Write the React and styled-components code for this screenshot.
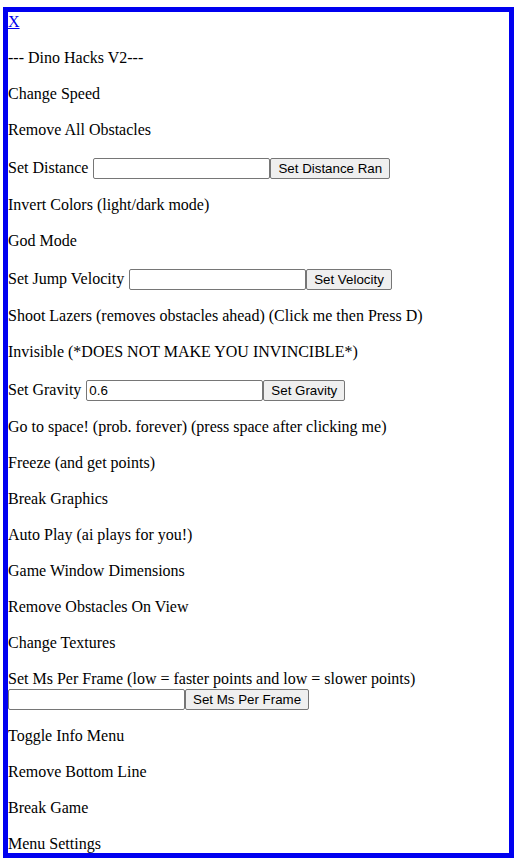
import styled, { createGlobalStyle } from 'styled-components'

const GlobalStyle = createGlobalStyle`
  body {
    margin: 0;
    background: #ffffff;
    font-family: 'Liberation Serif', 'Times New Roman', serif;
    font-size: 16px;
    color: #000000;
  }
`

const Panel = styled.div`
  margin: 7px 0 0 3px;
  width: 501px;
  height: 841px;
  border: 5px solid #0000f0;
  overflow: hidden;
  line-height: 20px;
`

const CloseLink = styled.a`
  display: block;
  color: #0000ee;
  text-decoration: underline;
  cursor: pointer;
  width: max-content;
`

const Item = styled.p`
  margin: 16px 0;
  line-height: ${(p) => (p.$withField ? '23px' : '20px')};
  cursor: pointer;
`

const Field = styled.input`
  box-sizing: border-box;
  width: 177px;
  height: 21px;
  margin: 0 0 0 ${(p) => (p.$flush ? '0' : '1px')};
  padding: 1px 2px;
  border: 1px solid #767676;
  border-radius: 2px;
  font-family: 'Liberation Sans', Arial, sans-serif;
  font-size: 13.333px;
  color: #000;
  background: #fff;
`

const Button = styled.button`
  box-sizing: border-box;
  height: 21px;
  margin: 0;
  padding: 1px 7px;
  border: 1px solid #767676;
  border-radius: 2px;
  background: #efefef;
  font-family: 'Liberation Sans', Arial, sans-serif;
  font-size: 13.333px;
  color: #000;
`

const items = [
  { label: '--- Dino Hacks V2---' },
  { label: 'Change Speed' },
  { label: 'Remove All Obstacles' },
  { label: 'Set Distance', button: 'Set Distance Ran' },
  { label: 'Invert Colors (light/dark mode)' },
  { label: 'God Mode' },
  { label: 'Set Jump Velocity', button: 'Set Velocity' },
  { label: 'Shoot Lazers (removes obstacles ahead) (Click me then Press D)' },
  { label: 'Invisible (*DOES NOT MAKE YOU INVINCIBLE*)' },
  { label: 'Set Gravity', button: 'Set Gravity', value: '0.6' },
  { label: 'Go to space! (prob. forever) (press space after clicking me)' },
  { label: 'Freeze (and get points)' },
  { label: 'Break Graphics' },
  { label: 'Auto Play (ai plays for you!)' },
  { label: 'Game Window Dimensions' },
  { label: 'Remove Obstacles On View' },
  { label: 'Change Textures' },
  { label: 'Set Ms Per Frame (low = faster points and low = slower points)', button: 'Set Ms Per Frame', wrap: true },
  { label: 'Toggle Info Menu' },
  { label: 'Remove Bottom Line' },
  { label: 'Break Game' },
  { label: 'Menu Settings' },
]

export default function App() {
  return (
    <>
      <GlobalStyle />
      <Panel>
        <CloseLink>X</CloseLink>
        {items.map((item) => {
          if (!item.button) return <Item key={item.label}>{item.label}</Item>
          if (item.wrap) {
            return (
              <Item key={item.label}>
                {item.label}
                <br />
                <Field $flush type="text" defaultValue={item.value || ''} />
                <Button>{item.button}</Button>
              </Item>
            )
          }
          return (
            <Item key={item.label} $withField>
              {item.label}{' '}
              <Field type="text" defaultValue={item.value || ''} />
              <Button>{item.button}</Button>
            </Item>
          )
        })}
      </Panel>
    </>
  )
}
